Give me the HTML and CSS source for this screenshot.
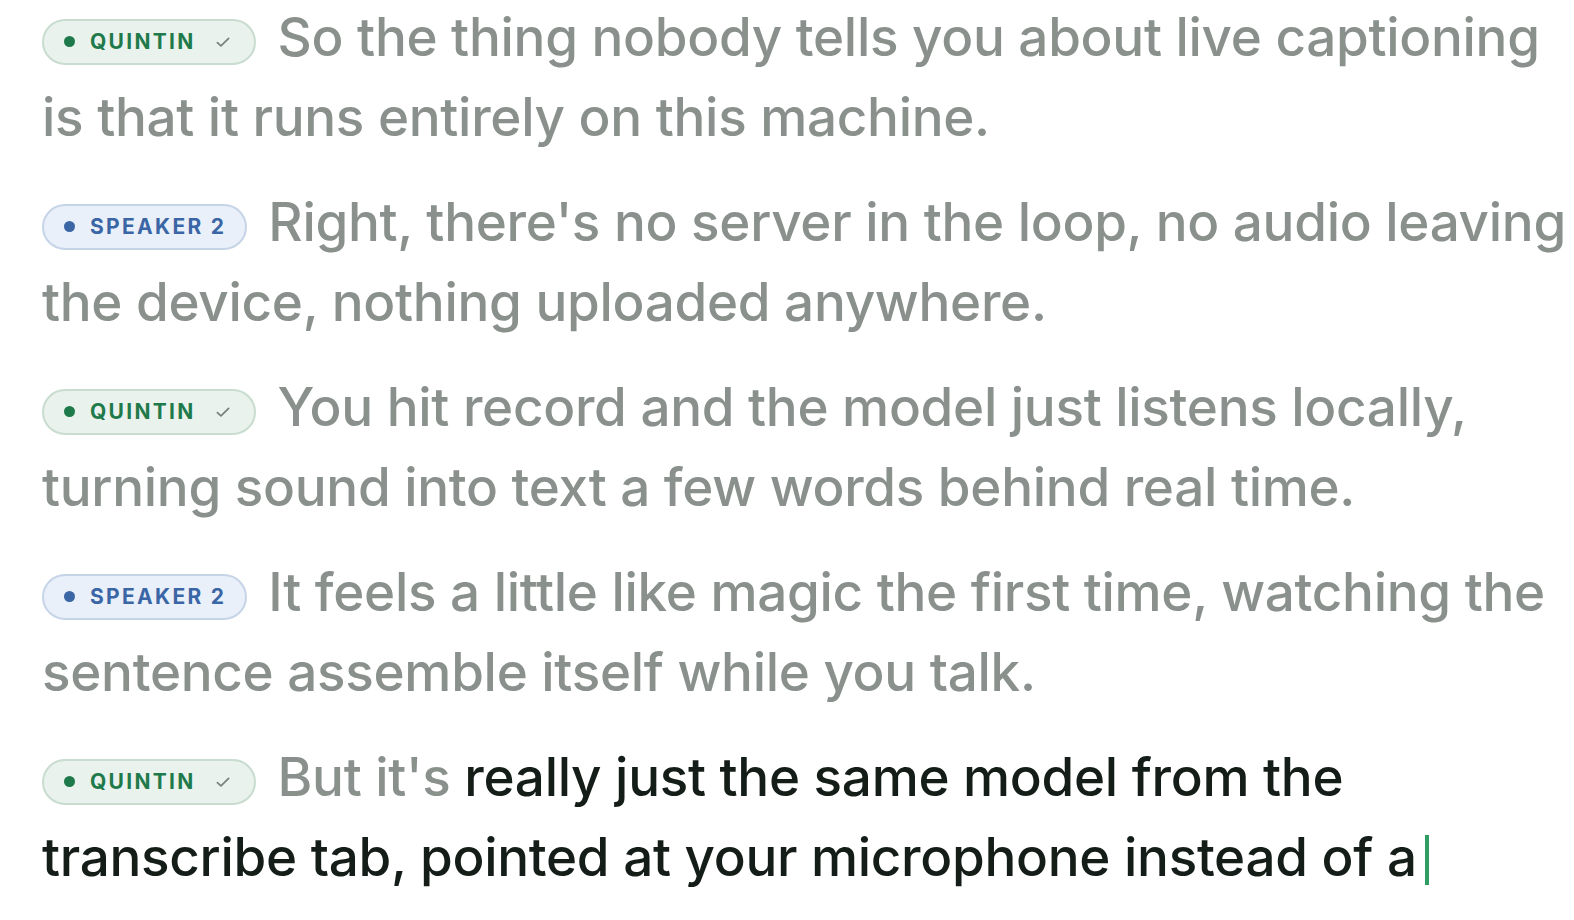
FILE: index.html
```html
<!DOCTYPE html>
<html lang="en">
<head>
<meta charset="utf-8">
<title>Live captions</title>
<link rel="stylesheet" href="styles.css">
</head>
<body>
<main class="transcript">
  <p class="seg"><span class="chip chip-q"><span class="dot"></span>QUINTIN<svg class="check" viewBox="0 0 16 16"><path d="M3 8.5l3.2 3L13 4.8"/></svg></span><span class="said">So the thing nobody tells you about live captioning is that it runs entirely on this machine.</span></p>
  <p class="seg"><span class="chip chip-s"><span class="dot"></span>SPEAKER 2</span><span class="said">Right, there's no server in the loop, no audio leaving the device, nothing uploaded anywhere.</span></p>
  <p class="seg"><span class="chip chip-q"><span class="dot"></span>QUINTIN<svg class="check" viewBox="0 0 16 16"><path d="M3 8.5l3.2 3L13 4.8"/></svg></span><span class="said">You hit record and the model just listens locally, turning sound into text a few words behind real time.</span></p>
  <p class="seg"><span class="chip chip-s"><span class="dot"></span>SPEAKER 2</span><span class="said">It feels a little like magic the first time, watching the sentence assemble itself while you talk.</span></p>
  <p class="seg"><span class="chip chip-q"><span class="dot"></span>QUINTIN<svg class="check" viewBox="0 0 16 16"><path d="M3 8.5l3.2 3L13 4.8"/></svg></span><span class="said">But it's </span><span class="live">really just the same model from the transcribe tab, pointed at your microphone instead of a</span><span class="caret"></span></p>
</main>
</body>
</html>
```
FILE: styles.css
```css
html, body {
  margin: 0;
  padding: 0;
  background: #ffffff;
  overflow: hidden;
}
.transcript {
  margin: -3px 0 0 0;
  padding: 0 0 0 42px;
  font-family: Inter, "Noto Sans", sans-serif;
  font-size: 53px;
  font-weight: 500;
  letter-spacing: -0.3px;
  line-height: 80px;
  color: #8a918d;
}
.seg {
  margin: 0 0 25px 0;
}
.chip {
  display: inline-flex;
  align-items: center;
  height: 46px;
  box-sizing: border-box;
  padding: 0 22px 0 20px;
  margin-right: 22px;
  border-radius: 23px;
  border: 2px solid;
  font-family: Inter, sans-serif;
  font-size: 21px;
  font-weight: 700;
  letter-spacing: 2.3px;
  line-height: 1;
  vertical-align: 9px;
}
.dot {
  width: 11px;
  height: 11px;
  border-radius: 50%;
  margin-right: 15px;
  background: currentColor;
}
.chip-q {
  background: #e9f2ed;
  border-color: #c9dcd0;
  color: #1f7a4b;
}
.chip-s {
  padding-right: 19px;
  margin-right: 21px;
  background: #eaf0f9;
  border-color: #c6d4e7;
  color: #3a66a6;
}
.check {
  width: 18px;
  height: 18px;
  margin-left: 18px;
  fill: none;
  stroke: #75817a;
  stroke-width: 1.5;
  stroke-linecap: round;
  stroke-linejoin: round;
}
.live {
  color: #141d18;
}
.caret {
  display: inline-block;
  width: 4px;
  height: 50px;
  margin-left: 8px;
  background: #2f9e64;
  vertical-align: -9px;
}
```
